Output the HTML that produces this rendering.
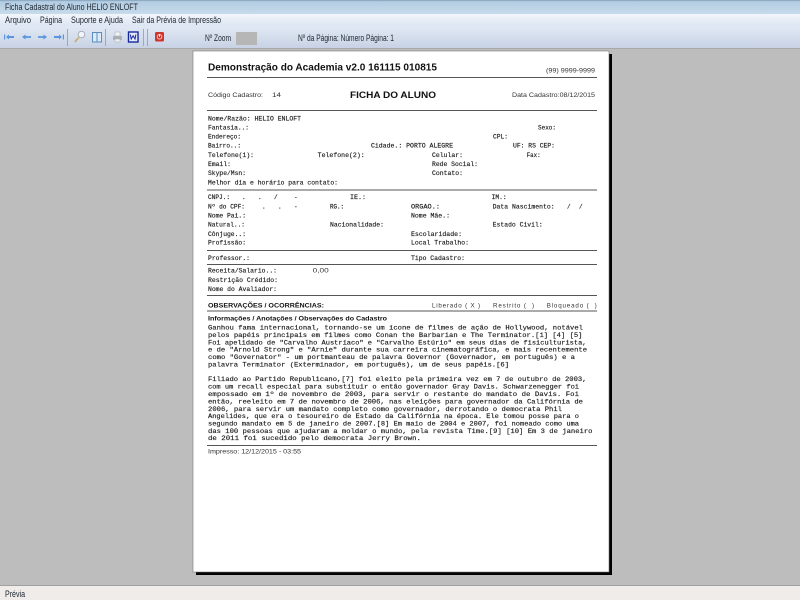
<!DOCTYPE html>
<html><head><meta charset="utf-8"><title>Ficha Cadastral</title>
<style>
html,body{margin:0;padding:0;width:800px;height:600px;overflow:hidden;background:#bdbdbd}
svg{position:absolute;left:0;top:0;display:block}
text{white-space:pre}
.u{font:9px "Liberation Sans",sans-serif;fill:#1c2430}
.m{font:6px "Liberation Mono",monospace;fill:#222;stroke:#222;stroke-width:.16}
.b{font:6.3px "Liberation Mono",monospace;fill:#222;stroke:#222;stroke-width:.16}
.s{font:6.2px "Liberation Sans",sans-serif;fill:#333}
.h{font-family:"Liberation Sans",sans-serif;font-weight:bold;fill:#111}
#r{filter:blur(.3px)}
#i{filter:blur(.35px)}
</style></head><body>
<svg width="800" height="600" viewBox="0 0 800 600" xmlns="http://www.w3.org/2000/svg">
<defs>
<linearGradient id="t" x1="0" y1="0" x2="0" y2="1"><stop offset="0" stop-color="#7f9db8"/><stop offset=".12" stop-color="#b4cde2"/><stop offset="1" stop-color="#c6dbeb"/></linearGradient>
<linearGradient id="n" x1="0" y1="0" x2="0" y2="1"><stop offset="0" stop-color="#f2f6fb"/><stop offset="1" stop-color="#dde6f2"/></linearGradient>
<linearGradient id="k" x1="0" y1="0" x2="0" y2="1"><stop offset="0" stop-color="#e2e9f5"/><stop offset="1" stop-color="#c7d2e4"/></linearGradient>
</defs>
<rect width="800" height="600" fill="#bdbdbd"/>
<rect width="800" height="14" fill="url(#t)"/>
<rect y="14" width="800" height="12" fill="url(#n)"/>
<rect y="26" width="800" height="22" fill="url(#k)"/>
<rect y="48" width="800" height="1" fill="#a8a8a8"/>
<text class="u" x="5" y="10" textLength="133" lengthAdjust="spacingAndGlyphs">Ficha Cadastral do Aluno HELIO ENLOFT</text>
<text class="u" x="5" y="23" textLength="26" lengthAdjust="spacingAndGlyphs">Arquivo</text>
<text class="u" x="40" y="23" textLength="22" lengthAdjust="spacingAndGlyphs">Página</text>
<text class="u" x="71" y="23" textLength="52" lengthAdjust="spacingAndGlyphs">Suporte e Ajuda</text>
<text class="u" x="132" y="23" textLength="89" lengthAdjust="spacingAndGlyphs">Sair da Prévia de Impressão</text>

<!-- toolbar icons -->
<g id="i">
<g fill="#5a94e0">
<path d="M4 34.500h1.200v5H4zM6 37l3-2.500v1.500h5v2H9v1.500z"/>
<path d="M22 37l3.500-2.500v1.600H31v1.800h-5.500v1.600z"/>
<path d="M47 37l-3.500-2.500v1.600H38v1.800h5.500v1.600z"/>
<path d="M62 37l-3-2.500V36h-5v2h5v1.500zM62.800 34.500H64v5h-1.200z"/>
</g>
<rect x="67" y="29" width="1" height="17" fill="#9aa9bd"/>
<circle cx="81.500" cy="34.500" r="3.300" stroke="#a8adb5" fill="#f0f5fb"/>
<path d="M78.800 37.500l-4 4.500" stroke="#d0a860" stroke-width="1.600" fill="none"/>
<path d="M92.500 32.500h4l.5.6.5-.6h4v9.500h-9z" fill="#dceaf7" stroke="#5a8cc0"/>
<path d="M97 33.500V42" stroke="#5a8cc0" fill="none"/>
<rect x="105" y="29" width="1" height="17" fill="#9aa9bd"/>
<rect x="115" y="32" width="5" height="4" fill="#f4f4f4" stroke="#b0b0b0" stroke-width=".6"/>
<rect x="113" y="36" width="9" height="4" rx="1" fill="#aab0b8"/>
<rect x="115" y="39" width="5" height="3" fill="#eee" stroke="#aaa" stroke-width=".5"/>
<rect x="128.500" y="32" width="9.500" height="10" fill="#e8ecff" stroke="#15279a" stroke-width="1.400"/>
<path d="M130.300 34.500l.9 4.500 1.900-3.300 1.900 3.300.9-4.500" fill="none" stroke="#15279a" stroke-width="1"/>
<rect x="143" y="29" width="1" height="17" fill="#9aa9bd"/><rect x="147" y="29" width="1" height="17" fill="#9aa9bd"/>
<rect x="155" y="32" width="9" height="9.500" rx="1.500" fill="#d0342e"/>
<circle cx="159.500" cy="36.800" r="2.300" fill="none" stroke="#f8d0c8" stroke-width=".9"/><path d="M159.500 34v2.800" stroke="#fff" stroke-width=".9"/>
</g>
<text class="u" x="205" y="41" textLength="26" lengthAdjust="spacingAndGlyphs">Nº Zoom</text>
<rect x="236" y="32" width="21" height="13" fill="#b6b6b6"/>
<text class="u" x="298" y="41" textLength="96" lengthAdjust="spacingAndGlyphs">Nº da Página: Número Página: 1</text>

<!-- status bar -->
<rect y="585" width="800" height="1" fill="#a0a0a0"/>
<rect y="586" width="800" height="14" fill="#f0ecea"/>
<text class="u" x="5" y="597" textLength="20" lengthAdjust="spacingAndGlyphs">Prévia</text>

<!-- page -->
<rect x="196" y="54" width="416" height="521" fill="#000"/>
<rect x="193" y="51" width="416" height="521" fill="#fff" stroke="#777" stroke-width=".6"/>
<g id="r">
<g fill="#555">
<rect x="207" y="77" width="390" height="1"/><rect x="207" y="110" width="390" height="1"/>
<rect x="207" y="189.500" width="390" height="1"/><rect x="207" y="250" width="390" height="1"/>
<rect x="207" y="264" width="390" height="1"/><rect x="207" y="295" width="390" height="1"/>
<rect x="207" y="310.500" width="390" height="1"/><rect x="207" y="445" width="390" height="1"/>
</g>
<text class="h" font-size="10" x="208" y="70.500" textLength="229" lengthAdjust="spacingAndGlyphs">Demonstração do Academia v2.0 161115 010815</text>
<text class="s" x="546" y="72.500" textLength="49" lengthAdjust="spacingAndGlyphs">(99) 9999-9999</text>
<text class="s" x="208" y="97" textLength="55" lengthAdjust="spacingAndGlyphs">Código Cadastro:</text>
<text class="s" x="272" y="97" textLength="9" lengthAdjust="spacingAndGlyphs">14</text>
<text class="h" font-size="9.500" x="350" y="98" textLength="86" lengthAdjust="spacingAndGlyphs">FICHA DO ALUNO</text>
<text class="s" x="512" y="97" textLength="83" lengthAdjust="spacingAndGlyphs">Data Cadastro:08/12/2015</text>

<text class="m" x="208" y="120.300" textLength="93" lengthAdjust="spacingAndGlyphs">Nome/Razão: HELIO ENLOFT</text>
<text class="m" x="208" y="129.300" textLength="41" lengthAdjust="spacingAndGlyphs">Fantasia..:</text>
<text class="m" x="538" y="129.300" textLength="18" lengthAdjust="spacingAndGlyphs">Sexo:</text>
<text class="m" x="208" y="138.300" textLength="33" lengthAdjust="spacingAndGlyphs">Endereço:</text>
<text class="m" x="493" y="138.300" textLength="15" lengthAdjust="spacingAndGlyphs">CPL:</text>
<text class="m" x="208" y="147.700" textLength="33" lengthAdjust="spacingAndGlyphs">Bairro..:</text>
<text class="m" x="371" y="147.700" textLength="82" lengthAdjust="spacingAndGlyphs">Cidade.: PORTO ALEGRE</text>
<text class="m" x="513" y="147.700" textLength="42" lengthAdjust="spacingAndGlyphs">UF: RS CEP:</text>
<text class="m" x="208" y="157" textLength="46" lengthAdjust="spacingAndGlyphs">Telefone(1):</text>
<text class="m" x="317.700" y="157" textLength="47" lengthAdjust="spacingAndGlyphs">Telefone(2):</text>
<text class="m" x="432" y="157" textLength="31" lengthAdjust="spacingAndGlyphs">Celular:</text>
<text class="m" x="526.700" y="157" textLength="14" lengthAdjust="spacingAndGlyphs">Fax:</text>
<text class="m" x="208" y="166" textLength="23" lengthAdjust="spacingAndGlyphs">Email:</text>
<text class="m" x="432" y="166" textLength="46" lengthAdjust="spacingAndGlyphs">Rede Social:</text>
<text class="m" x="208" y="175" textLength="38" lengthAdjust="spacingAndGlyphs">Skype/Msn:</text>
<text class="m" x="432" y="175" textLength="31" lengthAdjust="spacingAndGlyphs">Contato:</text>
<text class="m" x="208" y="184.700" textLength="130" lengthAdjust="spacingAndGlyphs">Melhor dia e horário para contato:</text>

<text class="m" x="208" y="199" textLength="22" lengthAdjust="spacingAndGlyphs">CNPJ.:</text>
<text class="m" x="242" y="199">.</text><text class="m" x="258" y="199">.</text><text class="m" x="274" y="199">/</text><text class="m" x="294" y="199">-</text>
<text class="m" x="350" y="199" textLength="16" lengthAdjust="spacingAndGlyphs">IE.:</text>
<text class="m" x="491.700" y="199" textLength="15" lengthAdjust="spacingAndGlyphs">IM.:</text>
<text class="m" x="208" y="208.300" textLength="37" lengthAdjust="spacingAndGlyphs">Nº do CPF:</text>
<text class="m" x="262" y="208.300">.</text><text class="m" x="278" y="208.300">.</text><text class="m" x="294" y="208.300">-</text>
<text class="m" x="330" y="208.300" textLength="14" lengthAdjust="spacingAndGlyphs">RG.:</text>
<text class="m" x="411" y="208.300" textLength="29" lengthAdjust="spacingAndGlyphs">ORGAO.:</text>
<text class="m" x="492.700" y="208.300" textLength="62" lengthAdjust="spacingAndGlyphs">Data Nascimento:</text>
<text class="m" x="567" y="208.300">/</text><text class="m" x="579" y="208.300">/</text>
<text class="m" x="208" y="217.700" textLength="38" lengthAdjust="spacingAndGlyphs">Nome Pai.:</text>
<text class="m" x="411" y="217.700" textLength="39" lengthAdjust="spacingAndGlyphs">Nome Mãe.:</text>
<text class="m" x="208" y="226.300" textLength="37" lengthAdjust="spacingAndGlyphs">Natural..:</text>
<text class="m" x="330" y="226.300" textLength="54" lengthAdjust="spacingAndGlyphs">Nacionalidade:</text>
<text class="m" x="492.700" y="226.300" textLength="50" lengthAdjust="spacingAndGlyphs">Estado Civil:</text>
<text class="m" x="208" y="236" textLength="38" lengthAdjust="spacingAndGlyphs">Cônjuge..:</text>
<text class="m" x="411" y="236" textLength="51" lengthAdjust="spacingAndGlyphs">Escolaridade:</text>
<text class="m" x="208" y="244.700" textLength="38" lengthAdjust="spacingAndGlyphs">Profissão:</text>
<text class="m" x="411" y="244.700" textLength="58" lengthAdjust="spacingAndGlyphs">Local Trabalho:</text>
<text class="m" x="208" y="260" textLength="42" lengthAdjust="spacingAndGlyphs">Professor.:</text>
<text class="m" x="411" y="260" textLength="54" lengthAdjust="spacingAndGlyphs">Tipo Cadastro:</text>
<text class="m" x="208" y="272.700" textLength="69" lengthAdjust="spacingAndGlyphs">Receita/Salario..:</text>
<text class="s" x="312.700" y="272.700" textLength="16" lengthAdjust="spacingAndGlyphs">0,00</text>
<text class="m" x="208" y="282" textLength="70" lengthAdjust="spacingAndGlyphs">Restrição Crédido:</text>
<text class="m" x="208" y="291" textLength="69" lengthAdjust="spacingAndGlyphs">Nome do Avaliador:</text>

<text class="h" font-size="6.500" x="208" y="307.500" textLength="116" lengthAdjust="spacingAndGlyphs">OBSERVAÇÕES / OCORRÊNCIAS:</text>
<text class="s" x="432" y="307.500" textLength="48" lengthAdjust="spacing">Liberado ( X )</text>
<text class="s" x="493" y="307.500" textLength="41" lengthAdjust="spacing">Restrito (  )</text>
<text class="s" x="546.700" y="307.500" textLength="50" lengthAdjust="spacing">Bloqueado (  )</text>
<text class="h" font-size="6.500" x="208" y="320.500" textLength="179" lengthAdjust="spacingAndGlyphs">Informações / Anotações / Observações do Cadastro</text>

<text class="b" x="208" y="329.500" textLength="375" lengthAdjust="spacingAndGlyphs">Ganhou fama internacional, tornando-se um ícone de filmes de ação de Hollywood, notável</text>
<text class="b" x="208" y="337" textLength="374.500" lengthAdjust="spacingAndGlyphs">pelos papéis principais em filmes como Conan the Barbarian e The Terminator.[1] [4] [5]</text>
<text class="b" x="208" y="344.500" textLength="378.500" lengthAdjust="spacingAndGlyphs">Foi apelidado de "Carvalho Austríaco" e "Carvalho Estúrio" em seus dias de fisiculturista,</text>
<text class="b" x="208" y="351.700" textLength="379" lengthAdjust="spacingAndGlyphs">e de "Arnold Strong" e "Arnie" durante sua carreira cinematográfica, e mais recentemente</text>
<text class="b" x="208" y="359.200" textLength="367" lengthAdjust="spacingAndGlyphs">como "Governator" - um portmanteau de palavra Governor (Governador, em português) e a</text>
<text class="b" x="208" y="366.500" textLength="301" lengthAdjust="spacingAndGlyphs">palavra Terminator (Exterminador, em português), um de seus papéis.[6]</text>

<text class="b" x="208" y="381.200" textLength="378.500" lengthAdjust="spacingAndGlyphs">Filiado ao Partido Republicano,[7] foi eleito pela primeira vez em 7 de outubro de 2003,</text>
<text class="b" x="208" y="388.500" textLength="371" lengthAdjust="spacingAndGlyphs">com um recall especial para substituir o então governador Gray Davis. Schwarzenegger foi</text>
<text class="b" x="208" y="396.200" textLength="371" lengthAdjust="spacingAndGlyphs">empossado em 1º de novembro de 2003, para servir o restante do mandato de Davis. Foi</text>
<text class="b" x="208" y="403.500" textLength="375" lengthAdjust="spacingAndGlyphs">então, reeleito em 7 de novembro de 2006, nas eleições para governador da Califórnia de</text>
<text class="b" x="208" y="410.900" textLength="354" lengthAdjust="spacingAndGlyphs">2006, para servir um mandato completo como governador, derrotando o democrata Phil</text>
<text class="b" x="208" y="418.200" textLength="371" lengthAdjust="spacingAndGlyphs">Angelides, que era o tesoureiro de Estado da Califórnia na época. Ele tomou posse para o</text>
<text class="b" x="208" y="425.500" textLength="371" lengthAdjust="spacingAndGlyphs">segundo mandato em 5 de janeiro de 2007.[8] Em maio de 2004 e 2007, foi nomeado como uma</text>
<text class="b" x="208" y="432.900" textLength="384.500" lengthAdjust="spacingAndGlyphs">das 100 pessoas que ajudaram a moldar o mundo, pela revista Time.[9] [10] Em 3 de janeiro</text>
<text class="b" x="208" y="440.200" textLength="213" lengthAdjust="spacingAndGlyphs">de 2011 foi sucedido pelo democrata Jerry Brown.</text>
<text class="s" x="208" y="453.500" textLength="93" lengthAdjust="spacingAndGlyphs">Impresso: 12/12/2015 - 03:55</text>
</g>
</svg>
</body></html>
